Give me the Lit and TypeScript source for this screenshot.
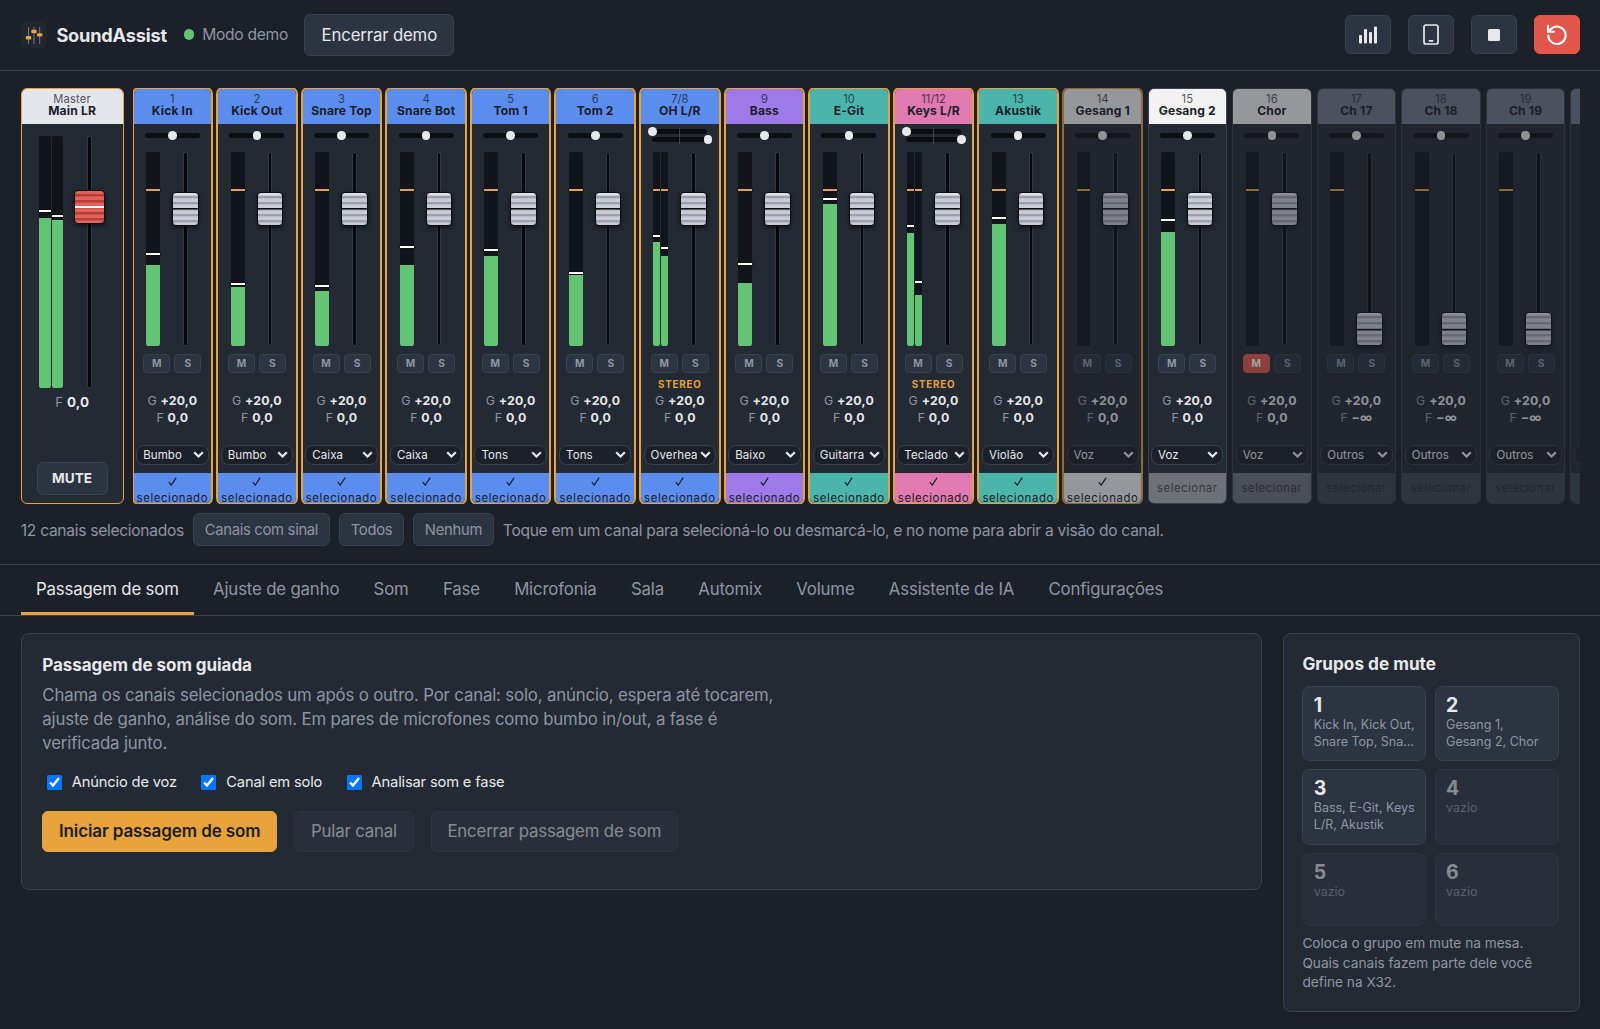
import { LitElement, css, html, svg, nothing } from "lit";
import { customElement, property } from "lit/decorators.js";
import { classMap } from "lit/directives/class-map.js";
import { styleMap } from "lit/directives/style-map.js";

interface Channel {
  nr: string;
  name: string;
  color: string;
  type: string;
  // level and peak in px above the meter's bottom, one entry for each side
  level: number[];
  peak: number[];
  selected?: boolean;
  off?: boolean;
  muted?: boolean;
  down?: boolean;
}

const BLUE = "#5b8def";
const PURPLE = "#9d7ae8";
const TEAL = "#4bb5ab";
const PINK = "#e07ab0";
const WHITE = "#f2f2f2";
const GREY = "#6f7787";

const channels: Channel[] = [
  { nr: "1", name: "Kick In", color: BLUE, type: "Bumbo", level: [81], peak: [91], selected: true },
  { nr: "2", name: "Kick Out", color: BLUE, type: "Bumbo", level: [59], peak: [61], selected: true },
  { nr: "3", name: "Snare Top", color: BLUE, type: "Caixa", level: [55], peak: [59], selected: true },
  { nr: "4", name: "Snare Bot", color: BLUE, type: "Caixa", level: [81], peak: [98], selected: true },
  { nr: "5", name: "Tom 1", color: BLUE, type: "Tons", level: [90], peak: [95], selected: true },
  { nr: "6", name: "Tom 2", color: BLUE, type: "Tons", level: [71], peak: [72], selected: true },
  { nr: "7/8", name: "OH L/R", color: BLUE, type: "Overhead", level: [104, 90], peak: [109, 97], selected: true },
  { nr: "9", name: "Bass", color: PURPLE, type: "Baixo", level: [63], peak: [81], selected: true },
  { nr: "10", name: "E-Git", color: TEAL, type: "Guitarra", level: [142], peak: [146], selected: true },
  { nr: "11/12", name: "Keys L/R", color: PINK, type: "Teclado", level: [113, 51], peak: [119, 63], selected: true },
  { nr: "13", name: "Akustik", color: TEAL, type: "Violão", level: [122], peak: [127], selected: true },
  { nr: "14", name: "Gesang 1", color: WHITE, type: "Voz", level: [0], peak: [], selected: true, off: true },
  { nr: "15", name: "Gesang 2", color: WHITE, type: "Voz", level: [114], peak: [125] },
  { nr: "16", name: "Chor", color: WHITE, type: "Voz", level: [0], peak: [], off: true, muted: true },
  { nr: "17", name: "Ch 17", color: GREY, type: "Outros", level: [0], peak: [], off: true, down: true },
  { nr: "18", name: "Ch 18", color: GREY, type: "Outros", level: [0], peak: [], off: true, down: true },
  { nr: "19", name: "Ch 19", color: GREY, type: "Outros", level: [0], peak: [], off: true, down: true },
  { nr: "20", name: "Ch 20", color: GREY, type: "Outros", level: [0], peak: [], off: true, down: true },
];

const tabs = [
  "Passagem de som",
  "Ajuste de ganho",
  "Som",
  "Fase",
  "Microfonia",
  "Sala",
  "Automix",
  "Volume",
  "Assistente de IA",
  "Configurações",
];

const muteGroups = [
  "Kick In, Kick Out, Snare Top, Snare Bot, Tom 1, Tom 2",
  "Gesang 1, Gesang 2, Chor",
  "Bass, E-Git, Keys L/R, Akustik",
  "",
  "",
  "",
];

//----------------------------------------------------------------------------------------------

@customElement("sa-meter")
export class SaMeter extends LitElement {
  @property({ attribute: false }) level: number[] = [];
  @property({ attribute: false }) peak: number[] = [];
  @property({ type: Boolean }) target = false;

  static get styles() {
    return css`
      :host {
        display: flex;
        gap: 1px;
        height: 100%;
      }

      .bar {
        position: relative;
        flex: 1;
        display: flex;
        align-items: flex-end;
        background: #11141b;
        border-radius: 2px;
      }

      .level {
        width: 100%;
        background: #63c474;
        border-radius: 0 0 2px 2px;
      }

      .peak,
      .target {
        position: absolute;
        left: 0;
        right: 0;
        height: 2px;
        background: #fff;
        box-shadow: 0 0 0 0.6px #0c0e12;
      }

      .target {
        top: 36.5px;
        background: #e8a33d;
      }
    `;
  }

  render() {
    return this.level.map(
      (level, i) => html`<div class="bar">
        <div class="level" style=${styleMap({ height: `${level}px` })}></div>
        ${this.target ? html`<div class="target"></div>` : nothing}
        ${this.peak[i] ? html`<div class="peak" style=${styleMap({ bottom: `${this.peak[i]}px` })}></div>` : nothing}
      </div>`
    );
  }
}

//----------------------------------------------------------------------------------------------

@customElement("sa-fader")
export class SaFader extends LitElement {
  @property({ type: Number }) travel = 40;
  @property({ type: Boolean, reflect: true }) master = false;

  static get styles() {
    return css`
      :host {
        position: relative;
        display: flex;
        justify-content: center;
        width: 26.6px;
        height: 100%;
      }

      :host([master]) {
        width: 31px;
      }

      .rail {
        box-sizing: border-box;
        width: 4.6px;
        background: #06080b;
        border: 1px solid #313846;
        border-radius: 2px;
      }

      .cap {
        position: absolute;
        left: 0;
        right: 0;
        box-sizing: border-box;
        height: 34px;
        border: 1px solid #0b0d11;
        border-radius: 4px;
        background:
          linear-gradient(#0b0d11, #0b0d11) center / 100% 1.5px no-repeat,
          linear-gradient(#dfe2e8 0 2px, transparent 2px),
          repeating-linear-gradient(#c9ccd6 0 3px, #9da0ab 3px 5px, #b9bcc6 5px 6px);
        box-shadow: 0 2px 4px rgba(0, 0, 0, 0.5);
      }

      :host([master]) .cap {
        background:
          linear-gradient(#fff, #fff) center / 100% 2px no-repeat,
          repeating-linear-gradient(#e2635a 0 3px, #b63d35 3px 5px, #cf4f46 5px 6px);
      }
    `;
  }

  render() {
    return html`<div class="rail"></div>
      <div class="cap" style=${styleMap({ top: `${this.travel}px` })}></div>`;
  }
}

//----------------------------------------------------------------------------------------------

@customElement("sa-strip")
export class SaStrip extends LitElement {
  @property({ attribute: false }) channel!: Channel;

  static get styles() {
    return css`
      :host {
        flex: 0 0 79.5px;
        display: block;
      }

      .strip {
        box-sizing: border-box;
        height: 100%;
        display: flex;
        flex-direction: column;
        align-items: center;
        overflow: hidden;
        background: #242a33;
        border: 1px solid #3a4150;
        border-radius: 6px;
      }

      .strip > * {
        flex: none;
      }

      .selected {
        border-color: #e8a33d;
        box-shadow: 0 0 0 1px #e8a33d;
      }

      .off {
        opacity: 0.57;
      }

      .head {
        align-self: stretch;
        box-sizing: border-box;
        height: 34.3px;
        padding-top: 4px;
        text-align: center;
        color: #1c2029;
        line-height: 12px;
      }

      .nr {
        font-size: 11.2px;
        opacity: 0.75;
      }

      .name {
        font-size: 12.1px;
        font-weight: 700;
        letter-spacing: 0.15px;
        white-space: nowrap;
      }

      .pan {
        position: relative;
        display: grid;
        align-content: center;
        gap: 2.6px;
        width: 55px;
        height: 16px;
        margin-top: 4px;
      }

      .track {
        display: flex;
        align-items: center;
        justify-content: center;
        height: 5.4px;
        border-radius: 3px;
        background: #0b0d11;
      }

      .track.left {
        justify-content: flex-start;
      }

      .track.right {
        justify-content: flex-end;
      }

      .knob {
        width: 8.6px;
        height: 8.6px;
        border-radius: 50%;
        background: #e6e8ec;
      }

      .left .knob {
        margin-left: -4px;
      }

      .right .knob {
        margin-right: -5px;
      }

      .centre {
        position: absolute;
        left: 27px;
        top: 0;
        width: 1px;
        height: 16px;
        background: #3a4150;
      }

      .levels {
        display: flex;
        gap: 12px;
        height: 194.3px;
        margin-top: 8.4px;
      }

      sa-meter {
        width: 13.8px;
      }

      sa-meter.stereo {
        width: 15.4px;
      }

      .buttons {
        display: flex;
        gap: 4px;
        margin-top: 7.8px;
      }

      .btn {
        box-sizing: border-box;
        width: 27px;
        height: 18.8px;
        border: 1px solid #3a4150;
        border-radius: 4px;
        background: #2d3441;
        color: #8e95a3;
        font-size: 10.2px;
        font-weight: 700;
        line-height: 16.8px;
        text-align: center;
      }

      .btn.on {
        background: #e2574c;
        border-color: #e2574c;
        color: #fff;
      }

      .link {
        height: 18px;
        line-height: 23px;
        color: #e8a33d;
        font-size: 9.8px;
        font-weight: 700;
        letter-spacing: 0.8px;
      }

      .values {
        color: #8e95a3;
        font-size: 12.3px;
        letter-spacing: 0.2px;
        line-height: 17.2px;
        text-align: center;
        margin-top: 1px;
      }

      .values b {
        color: #e6e8ec;
        font-weight: 700;
      }

      .type {
        box-sizing: border-box;
        display: flex;
        align-items: center;
        width: 72.4px;
        height: 20px;
        margin-top: 18.6px;
        padding: 0 4px 0 6px;
        border: 1px solid #3a4150;
        border-radius: 8px;
        background: #1c2029;
        color: #e6e8ec;
        font-size: 11.5px;
      }

      .type span {
        flex: 1;
        overflow: hidden;
        white-space: nowrap;
        letter-spacing: 0.1px;
      }

      .type svg {
        flex: none;
        width: 11px;
        height: 7px;
        margin-left: 3px;
      }

      .strip > .foot {
        box-sizing: border-box;
        align-self: stretch;
        flex: 1 0 0;
        display: flex;
        align-items: center;
        justify-content: center;
        min-height: 0;
        overflow: hidden;
        margin-top: 7.8px;
        padding-top: 1.5px;
        color: rgba(28, 32, 41, 0.75);
        font-size: 11.4px;
        letter-spacing: 0.5px;
        line-height: 17.2px;
        text-align: center;
        white-space: nowrap;
      }

      .strip.selected > .foot {
        align-items: flex-start;
        padding-top: 0;
        color: #1c2029;
        letter-spacing: 0.58px;
      }

      .tick {
        display: block;
        margin: 4px auto 4.6px;
      }
    `;
  }

  render() {
    const c = this.channel;
    const stereo = c.level.length > 1;
    const foot = c.selected ? c.color : `color-mix(in srgb, ${c.color} 36%, #242a33)`;
    return html`<div class=${classMap({ strip: true, selected: !!c.selected, off: !!c.off })}>
      <div class="head" style=${styleMap({ background: c.color })}>
        <div class="nr">${c.nr}</div>
        <div class="name">${c.name}</div>
      </div>
      <div class="pan">
        ${stereo
          ? html`<div class="centre"></div>
              <div class="track left"><div class="knob"></div></div>
              <div class="track right"><div class="knob"></div></div>`
          : html`<div class="track"><div class="knob"></div></div>`}
      </div>
      <div class="levels">
        <sa-meter class=${stereo ? "stereo" : ""} target .level=${c.level} .peak=${c.peak}></sa-meter>
        <sa-fader .travel=${c.down ? 160.3 : 40}></sa-fader>
      </div>
      <div class="buttons">
        <div class=${classMap({ btn: true, on: !!c.muted })}>M</div>
        <div class="btn">S</div>
      </div>
      <div class="link">${stereo ? "STEREO" : nothing}</div>
      <div class="values">G <b>+20,0</b><br />F <b>${c.down ? "−∞" : "0,0"}</b></div>
      <div class="type">
        <span>${c.type}</span>
        <svg viewBox="0 0 11 7"><path d="M1.2 1.2l4.3 4.3 4.3-4.3" fill="none" stroke="#e6e8ec" stroke-width="2.2" /></svg>
      </div>
      <div class="foot" style=${styleMap({ background: foot })}>
        ${c.selected
          ? html`<div>
              <svg class="tick" width="9" height="9" viewBox="0 0 9 9">
                <path d="M.8 5.2l2.4 3L8.2.6" fill="none" stroke="#1c2029" stroke-width="1.2" />
              </svg>
              selecionado
            </div>`
          : "selecionar"}
      </div>
    </div>`;
  }
}

//----------------------------------------------------------------------------------------------

@customElement("app-root")
export class AppRoot extends LitElement {
  static get styles() {
    return css`
      :host {
        display: block;
        min-height: 1029px;
        background: #1c2029;
        color: #e6e8ec;
        font-family: Inter, "Liberation Sans", sans-serif;
        font-size: 16.8px;
        letter-spacing: -0.16px;
      }

      header {
        box-sizing: border-box;
        display: flex;
        align-items: center;
        height: 71px;
        padding: 0 20.4px 1px;
        border-bottom: 1px solid #3a4150;
      }

      .logo {
        width: 26px;
        height: 26px;
        margin-left: 1px;
      }

      h1 {
        margin: 0 0 0 9px;
        font-size: 18.2px;
        font-weight: 700;
        letter-spacing: -0.2px;
      }

      .dot {
        width: 10.4px;
        height: 10.4px;
        margin: 0 8px 0 17px;
        border-radius: 50%;
        background: #63c474;
      }

      .mode {
        color: #8e95a3;
        font-size: 15.6px;
        letter-spacing: -0.3px;
      }

      .btn {
        box-sizing: border-box;
        display: flex;
        align-items: center;
        justify-content: center;
        border: 1px solid #3a4150;
        border-radius: 6px;
        background: #2d3441;
        white-space: nowrap;
      }

      .end {
        width: 150px;
        height: 42px;
        margin-left: 16.4px;
      }

      .tools {
        display: flex;
        gap: 17px;
        margin-left: auto;
      }

      .tools .btn {
        width: 46px;
        height: 39.5px;
      }

      .tools .danger {
        background: #e2574c;
        border-color: #e2574c;
      }

      .mixer {
        display: flex;
        gap: 9px;
        height: 415.5px;
        padding: 17.4px 20.4px 0 20.6px;
        letter-spacing: 0;
      }

      .master {
        box-sizing: border-box;
        flex: 0 0 103px;
        display: flex;
        flex-direction: column;
        align-items: center;
        overflow: hidden;
        background: #242a33;
        border: 1px solid #e8a33d;
        border-radius: 6px;
      }

      .master-head {
        align-self: stretch;
        box-sizing: border-box;
        height: 34.3px;
        padding-top: 4px;
        background: #e3e6ea;
        color: #1c2029;
        font-size: 12.1px;
        letter-spacing: 0.15px;
        line-height: 12px;
        text-align: center;
      }

      .master-head span {
        font-size: 11.2px;
        opacity: 0.75;
      }

      .master-levels {
        display: flex;
        gap: 10.8px;
        height: 251.7px;
        margin-top: 12.2px;
      }

      .master-levels sa-meter {
        width: 24.4px;
      }

      .master-value {
        margin-top: 6.7px;
        color: #8e95a3;
        font-size: 13.4px;
        letter-spacing: 0.1px;
        line-height: 16px;
      }

      .master-value b {
        color: #e6e8ec;
        font-weight: 700;
      }

      .master .btn {
        width: 71px;
        height: 33px;
        margin: auto 0 8px;
        font-size: 13.6px;
        font-weight: 700;
      }

      .strips {
        flex: 1;
        min-width: 0;
        display: flex;
        gap: 5.08px;
        overflow: hidden;
      }

      .selection {
        display: flex;
        align-items: center;
        gap: 9px;
        height: 33px;
        padding: 10px 20.4px 17px 20.8px;
        color: #8e95a3;
        font-size: 15.6px;
        letter-spacing: -0.3px;
        white-space: nowrap;
      }

      .selection .btn {
        height: 33px;
        padding: 0 10.8px;
        font-size: 14.8px;
        margin-bottom: 1px;
      }

      nav {
        display: flex;
        gap: 3.5px;
        height: 50px;
        padding: 0 20.6px;
        border-top: 1px solid #3a4150;
        border-bottom: 1px solid #3a4150;
        color: #8e95a3;
      }

      .tab {
        box-sizing: border-box;
        height: 50px;
        padding: 13.8px 15.4px 0;
        line-height: 21px;
        white-space: nowrap;
      }

      .tab.active {
        color: #e6e8ec;
        border-bottom: 3px solid #e8a33d;
      }

      main {
        display: grid;
        grid-template-columns: 1fr 297px;
        gap: 20.6px;
        align-items: start;
        padding: 17.6px 20.4px 0 20.6px;
      }

      .card {
        box-sizing: border-box;
        border: 1px solid #3a4150;
        border-radius: 8px;
        background: #242a33;
      }

      h2 {
        margin: 0;
        font-size: 17px;
        font-weight: 700;
        line-height: 22px;
        letter-spacing: -0.05px;
      }

      .guide {
        height: 256.4px;
        padding: 20px 20.7px;
      }

      .guide p {
        width: 740px;
        margin: 6.5px 0 0;
        color: #8e95a3;
        line-height: 24.1px;
      }

      .checks {
        display: flex;
        gap: 24.3px;
        margin-top: 16px;
        font-size: 14.7px;
        letter-spacing: -0.16px;
        line-height: 22px;
      }

      label {
        display: flex;
        align-items: center;
        gap: 10px;
      }

      label input {
        width: 15px;
        height: 15px;
        margin: 1px 0 0 0;
      }

      .checks label:first-child {
        margin-left: 4.5px;
      }

      .actions {
        display: flex;
        gap: 17.3px;
        margin-top: 17.5px;
      }

      .actions .btn {
        height: 41.4px;
        padding: 0 15.6px;
      }

      .actions .primary {
        background: #e8a33d;
        border-color: #e8a33d;
        color: #1c2029;
        font-size: 17px;
        font-weight: 600;
        letter-spacing: -0.1px;
      }

      .disabled {
        opacity: 0.5;
      }

      .mutes {
        height: 378.5px;
        padding: 19px 18.8px;
        letter-spacing: 0;
      }

      .mutes h2 {
        font-size: 17.2px;
        letter-spacing: 0;
      }

      .groups {
        display: grid;
        grid-template-columns: 123.4px 124.6px;
        grid-template-rows: 74.4px 75.4px 73px;
        gap: 8.6px 9px;
        margin-top: 11px;
      }

      .group {
        box-sizing: border-box;
        padding: 7.3px 9px 0 10.3px;
        border: 1px solid #3a4150;
        border-radius: 8px;
        background: #2d3441;
      }

      .group-nr {
        font-size: 19.5px;
        font-weight: 700;
        line-height: 21px;
      }

      .group-names {
        display: -webkit-box;
        -webkit-box-orient: vertical;
        -webkit-line-clamp: 2;
        overflow: hidden;
        margin-top: 0.4px;
        color: #8e95a3;
        font-size: 12.5px;
        line-height: 17.3px;
      }

      .note {
        margin: 8px 0 0;
        color: #8e95a3;
        font-size: 13.7px;
        letter-spacing: -0.03px;
        line-height: 19.5px;
      }
    `;
  }

  _logo() {
    const slider = (x: number, y: number) => svg`
      <path d="M${x} 5v17" stroke="#6f7787" stroke-width="1" />
      <rect x=${x - 2.7} y=${y} width="5.4" height="3.4" rx="1" fill="#e8a33d" />`;
    return html`<svg class="logo" viewBox="0 0 26 26">
      <rect width="26" height="26" rx="6" fill="#22272f" />
      ${slider(7.5, 14)} ${slider(13, 7.8)} ${slider(18.7, 11.2)}
    </svg>`;
  }

  _tools() {
    return html`<div class="tools">
      <div class="btn">
        <svg width="18" height="18" viewBox="0 0 18 18" fill="#e6e8ec">
          <rect x="0" y="9" width="3" height="8.5" rx="1" />
          <rect x="5" y="3" width="3" height="14.5" rx="1" />
          <rect x="10" y="6" width="3" height="11.5" rx="1" />
          <rect x="15" y="0.5" width="3" height="17" rx="1" />
        </svg>
      </div>
      <div class="btn">
        <svg width="16" height="21" viewBox="0 0 16 21" fill="none" stroke="#e6e8ec" stroke-width="1.7">
          <rect x="1" y="1" width="14" height="19" rx="2" />
          <path d="M6.4 16.8h3.2" stroke-linecap="round" />
        </svg>
      </div>
      <div class="btn">
        <svg width="12" height="12"><rect width="12" height="12" rx="1.5" fill="#e6e8ec" /></svg>
      </div>
      <div class="btn danger">
        <svg width="22" height="22" viewBox="0 0 22 22" fill="none" stroke="#fff" stroke-width="2.1" stroke-linecap="round" stroke-linejoin="round">
          <path d="M2.3 11.5a8.7 8.7 0 1 0 3-6.8L2 7.6" />
          <path d="M2 1.8v5.9h6" />
        </svg>
      </div>
    </div>`;
  }

  render() {
    return html`<header>
        ${this._logo()}
        <h1>SoundAssist</h1>
        <div class="dot"></div>
        <div class="mode">Modo demo</div>
        <div class="btn end">Encerrar demo</div>
        ${this._tools()}
      </header>

      <section class="mixer">
        <div class="master">
          <div class="master-head"><span>Master</span><br /><b>Main LR</b></div>
          <div class="master-levels">
            <sa-meter .level=${[169.5, 167.5]} .peak=${[175.5, 170.5]}></sa-meter>
            <sa-fader master .travel=${54}></sa-fader>
          </div>
          <div class="master-value">F <b>0,0</b></div>
          <div class="btn">MUTE</div>
        </div>
        <div class="strips">${channels.map((c) => html`<sa-strip .channel=${c}></sa-strip>`)}</div>
      </section>

      <section class="selection">
        <span>12 canais selecionados</span>
        <div class="btn">Canais com sinal</div>
        <div class="btn">Todos</div>
        <div class="btn">Nenhum</div>
        <span>Toque em um canal para selecioná-lo ou desmarcá-lo, e no nome para abrir a visão do canal.</span>
      </section>

      <nav>${tabs.map((t, i) => html`<div class=${classMap({ tab: true, active: i === 0 })}>${t}</div>`)}</nav>

      <main>
        <section class="card guide">
          <h2>Passagem de som guiada</h2>
          <p>
            Chama os canais selecionados um após o outro. Por canal: solo, anúncio, espera até tocarem, ajuste de ganho,
            análise do som. Em pares de microfones como bumbo in/out, a fase é verificada junto.
          </p>
          <div class="checks">
            <label><input type="checkbox" checked />Anúncio de voz</label>
            <label><input type="checkbox" checked />Canal em solo</label>
            <label><input type="checkbox" checked />Analisar som e fase</label>
          </div>
          <div class="actions">
            <div class="btn primary">Iniciar passagem de som</div>
            <div class="btn disabled">Pular canal</div>
            <div class="btn disabled">Encerrar passagem de som</div>
          </div>
        </section>

        <aside class="card mutes">
          <h2>Grupos de mute</h2>
          <div class="groups">
            ${muteGroups.map(
              (names, i) => html`<div class=${classMap({ group: true, disabled: !names })}>
                <div class="group-nr">${i + 1}</div>
                <div class="group-names">${names || "vazio"}</div>
              </div>`
            )}
          </div>
          <p class="note">Coloca o grupo em mute na mesa. Quais canais fazem parte dele você define na X32.</p>
        </aside>
      </main>`;
  }
}
